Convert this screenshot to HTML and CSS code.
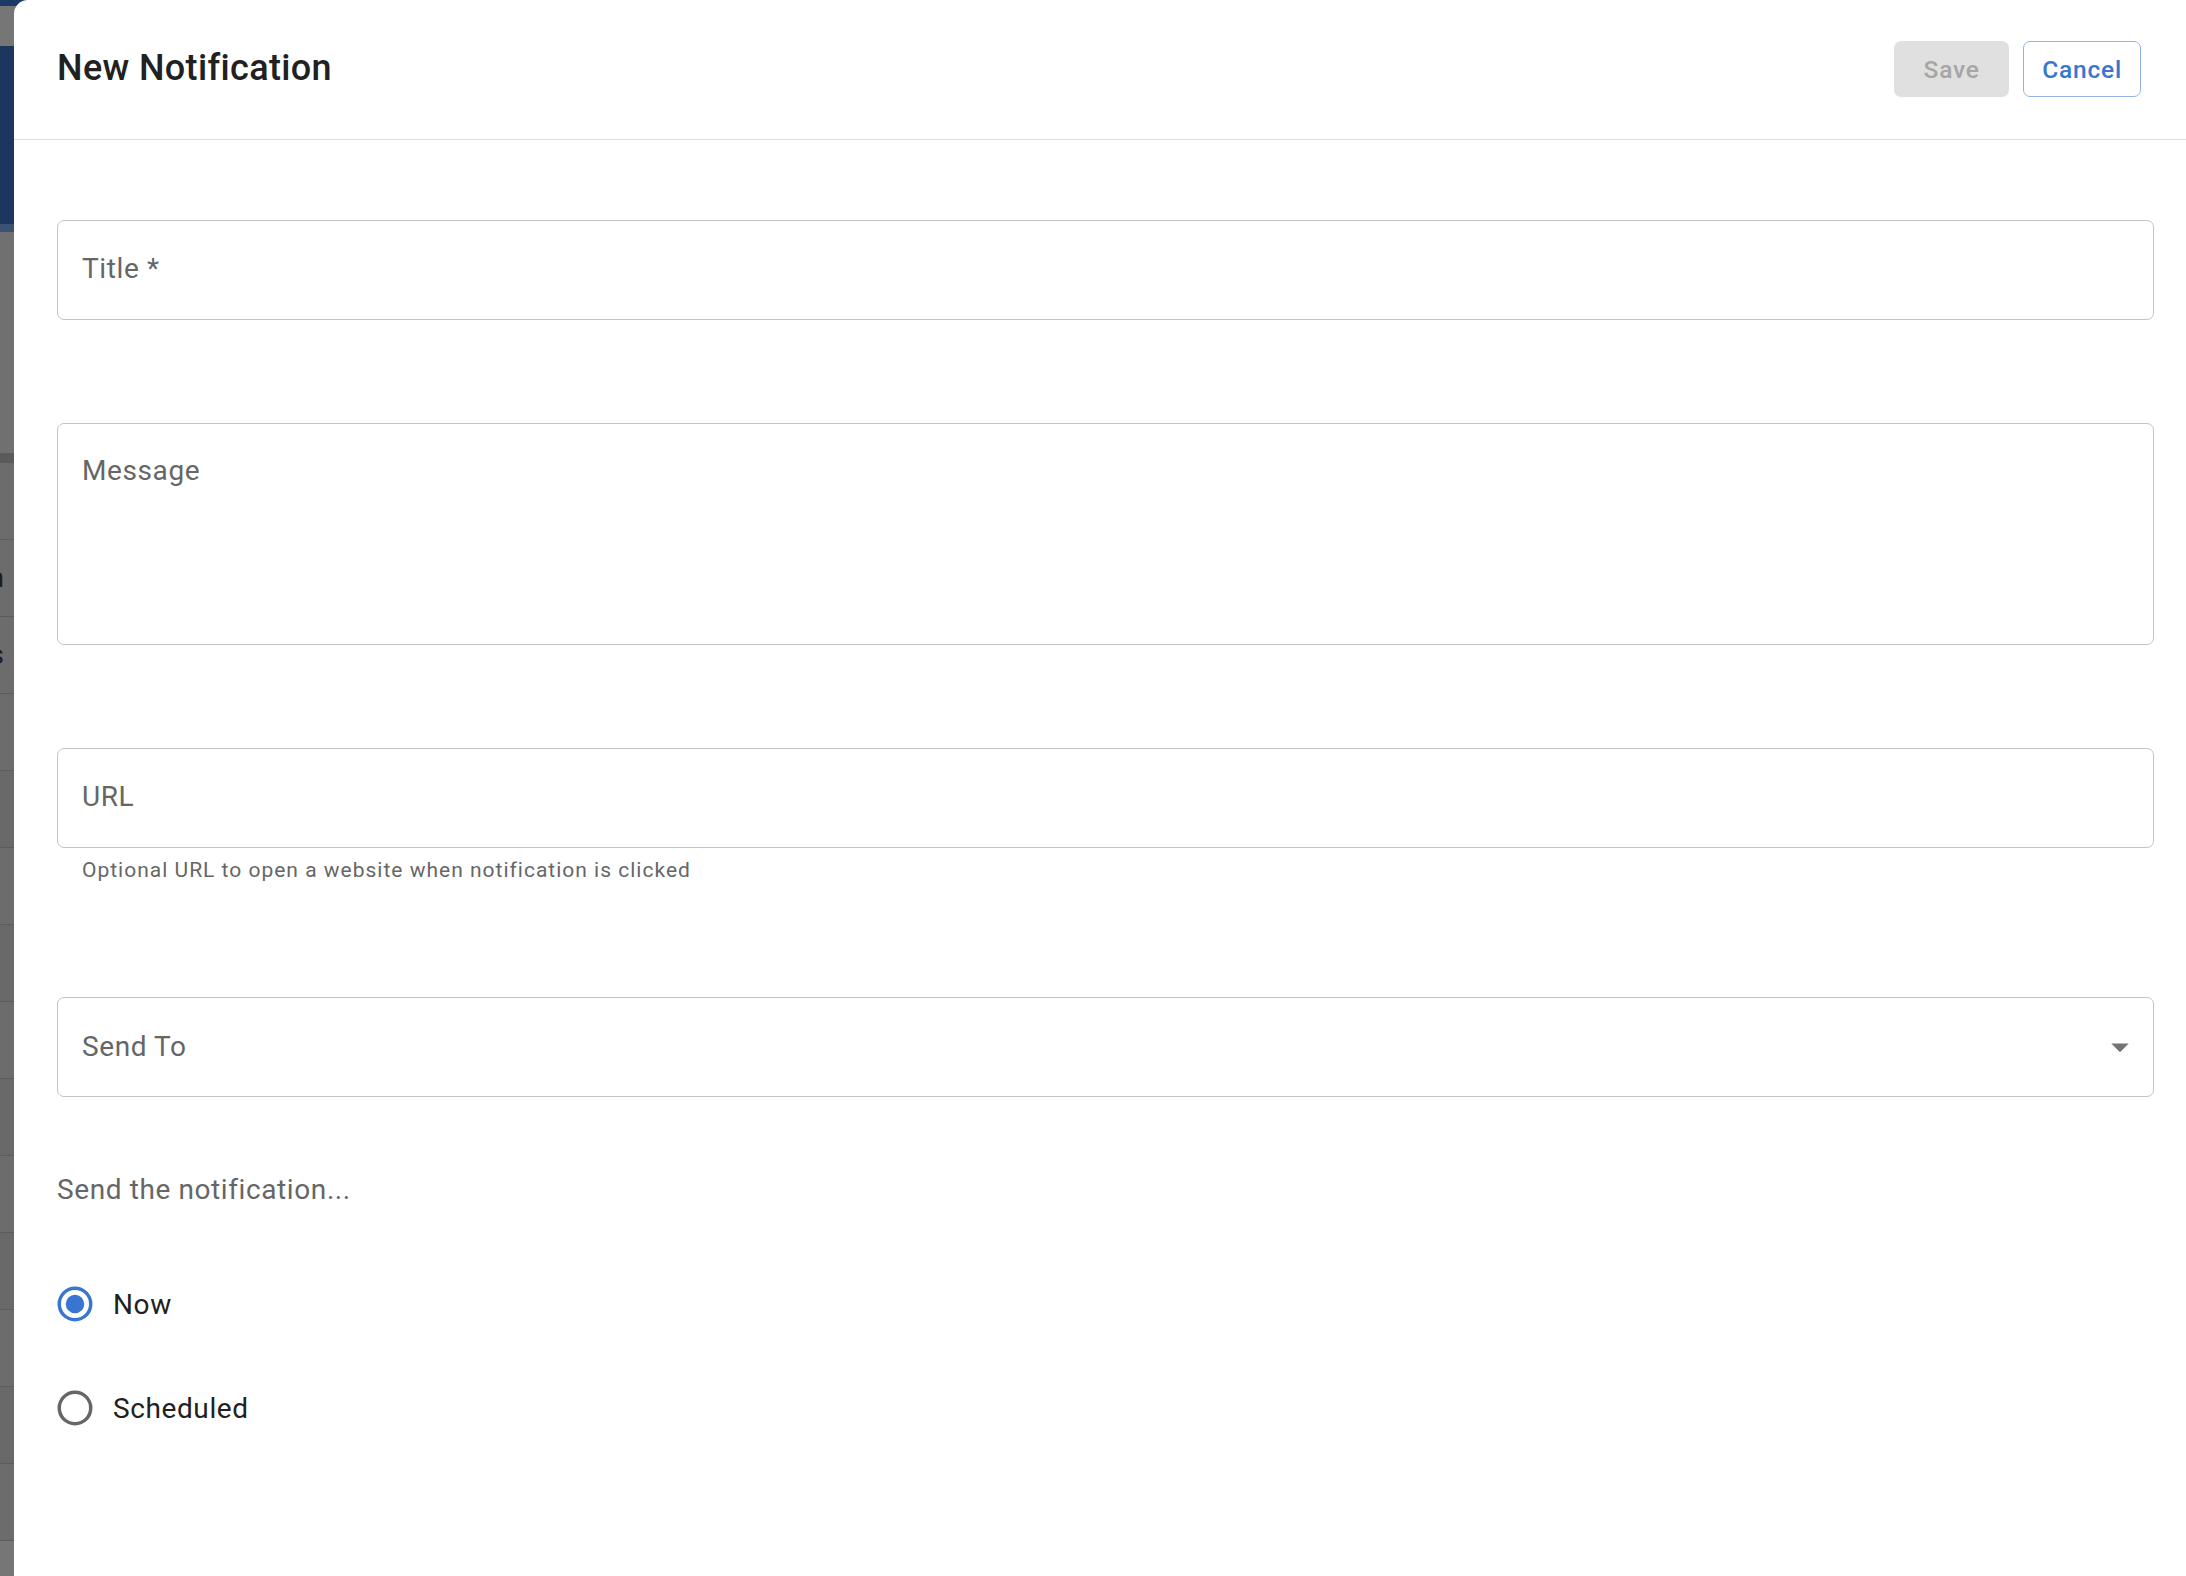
FILE: index.html
```html
<!DOCTYPE html>
<html lang="en">
<head>
<meta charset="utf-8">
<title>New Notification</title>
<link rel="stylesheet" href="styles.css">
</head>
<body>
<div class="app">
  <aside class="strip">
    <div class="strip-navy-top"></div>
    <div class="strip-grey-top"></div>
    <div class="strip-navy"></div>
    <div class="strip-navy-edge"></div>
    <div class="strip-grey-block"></div>
    <div class="strip-band"></div>
    <div class="strip-item"></div>
    <div class="strip-item"><span class="strip-text">m</span></div>
    <div class="strip-item"><span class="strip-text">s</span></div>
    <div class="strip-item"></div>
    <div class="strip-item alt"></div>
    <div class="strip-item"></div>
    <div class="strip-item alt"></div>
    <div class="strip-item"></div>
    <div class="strip-item alt"></div>
    <div class="strip-item"></div>
    <div class="strip-item alt"></div>
    <div class="strip-item"></div>
    <div class="strip-item alt"></div>
    <div class="strip-item"></div>
  </aside>
  <main class="panel">
    <header class="header">
      <h1 class="title">New Notification</h1>
      <div class="actions">
        <button class="btn btn-save" disabled>Save</button>
        <button class="btn btn-cancel">Cancel</button>
      </div>
    </header>
    <section class="form">
      <div class="field">Title *</div>
      <div class="field field-multi">Message</div>
      <div class="field field-url">URL</div>
      <div class="helper">Optional URL to open a website when notification is clicked</div>
      <div class="field field-select">
        <span>Send To</span>
        <svg class="select-arrow" viewBox="0 0 24 24" width="42" height="42"><path d="M7 10l5 5 5-5z" fill="#757575"/></svg>
      </div>
      <div class="section-label">Send the notification...</div>
      <div class="radio-group">
        <label class="radio-row">
          <svg class="radio" viewBox="0 0 24 24" width="42" height="42"><circle cx="12" cy="12" r="9" fill="none" stroke="#3876d1" stroke-width="2"/><circle cx="12" cy="12" r="5.3" fill="#3876d1"/></svg>
          <span class="radio-label">Now</span>
        </label>
        <label class="radio-row">
          <svg class="radio" viewBox="0 0 24 24" width="42" height="42"><circle cx="12" cy="12" r="9" fill="none" stroke="#666666" stroke-width="2"/></svg>
          <span class="radio-label">Scheduled</span>
        </label>
      </div>
    </section>
  </main>
</div>
</body>
</html>
```

FILE: styles.css
```css
html, body {
  margin: 0;
  padding: 0;
  height: 100%;
}
body {
  font-family: Roboto, "Liberation Sans", sans-serif;
  background: #1c3a66;
  overflow: hidden;
}
.app {
  display: flex;
  height: 1576px;
  background: linear-gradient(#1c3a66 0, #1c3a66 6px, #767676 6px, #767676 100%);
}
.strip {
  width: 14px;
  flex: none;
  display: flex;
  flex-direction: column;
  overflow: hidden;
}
.strip-navy-top { height: 6px; background: #1c3a66; }
.strip-grey-top { height: 40px; background: #767676; }
.strip-navy { height: 178px; background: #1b3760; }
.strip-navy-edge { height: 8px; background: #3d5272; }
.strip-grey-block { height: 221px; background: #707070; }
.strip-band { height: 10px; background: #5b5b5b; }
.strip-item {
  height: 76px;
  flex: none;
  border-bottom: 1px solid #5c5c5c;
  background: #6c6c6c;
  display: flex;
  align-items: center;
  justify-content: flex-end;
  overflow: hidden;
}
.strip-item.alt { background: #696969; }
.strip-text {
  font-size: 28px;
  color: #1e1e1e;
  margin-right: 10px;
  line-height: 1;
}
.panel {
  flex: 1;
  background: #ffffff;
  border-top-left-radius: 14px;
  display: flex;
  flex-direction: column;
}
.header {
  height: 140px;
  box-sizing: border-box;
  border-bottom: 1px solid #e0e0e0;
  display: flex;
  align-items: center;
  justify-content: space-between;
  padding: 0 45px 1px 43px;
}
.title {
  margin: 0 0 2px 0;
  font-size: 36px;
  font-weight: 500;
  color: #212121;
  letter-spacing: 0.35px;
}
.actions {
  display: flex;
  gap: 14px;
}
.btn {
  height: 56px;
  min-width: 114px;
  box-sizing: border-box;
  padding: 0 18px;
  border-radius: 7px;
  font-family: Roboto, "Liberation Sans", sans-serif;
  font-size: 24.5px;
  font-weight: 500;
  letter-spacing: 0.8px;
  display: flex;
  align-items: center;
  justify-content: center;
}
.btn-save {
  width: 115px;
  background: #e0e0e0;
  border: none;
  color: #a6a6a6;
}
.btn-cancel {
  background: #ffffff;
  border: 1px solid #93b4e6;
  color: #3876d1;
}
.form {
  padding: 80px 32px 0 43px;
  display: flex;
  flex-direction: column;
}
.field {
  height: 100px;
  box-sizing: border-box;
  border: 1px solid #c4c4c4;
  border-radius: 7px;
  padding: 0 24px 3px 24px;
  display: flex;
  align-items: center;
  font-size: 28px;
  color: #666666;
  letter-spacing: 0.6px;
}
.field-multi {
  height: 222px;
  margin-top: 103px;
  align-items: flex-start;
  padding-top: 30px;
}
.field-url {
  margin-top: 103px;
}
.helper {
  margin-top: 5px;
  padding-left: 25px;
  font-size: 21px;
  line-height: 35px;
  letter-spacing: 1px;
  color: #666666;
}
.field-select {
  margin-top: 109px;
  justify-content: space-between;
  padding-right: 12px;
  padding-bottom: 0;
}
.select-arrow {
  display: block;
}
.field-select span {
  padding-bottom: 2px;
}
.section-label {
  margin-top: 76px;
  font-size: 28px;
  color: #666666;
  letter-spacing: 0.6px;
}
.radio-group {
  margin-top: 46px;
  display: flex;
  flex-direction: column;
}
.radio-row {
  height: 104px;
  display: flex;
  align-items: center;
  gap: 17px;
}
.radio {
  display: block;
  margin-left: -3px;
}
.radio-label {
  font-size: 28px;
  color: #212121;
  letter-spacing: 0.6px;
}
```
